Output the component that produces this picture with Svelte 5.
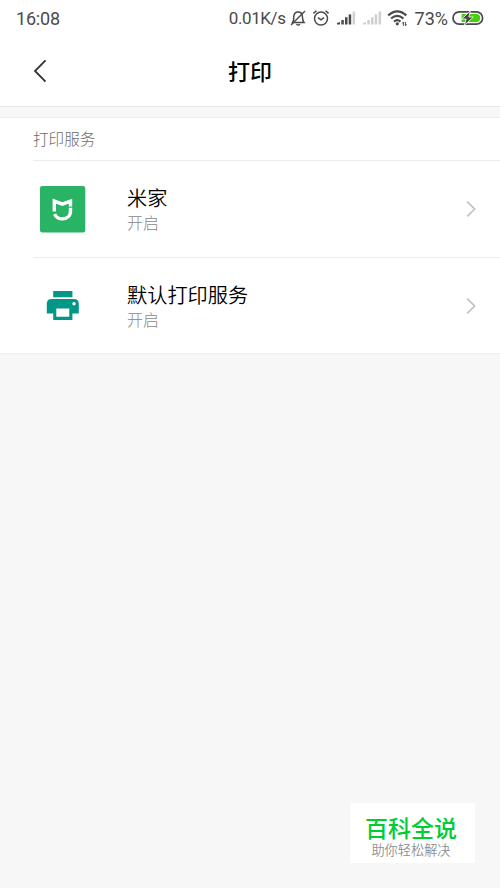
<script>
  const services = [
    { name: "米家", status: "开启", icon: "mijia" },
    { name: "默认打印服务", status: "开启", icon: "printer" },
  ];

  const signals = [
    { color: "#4a4a4a", last: "#d0d0d0" },
    { color: "#cfcfcf", last: "#cfcfcf" },
  ];
</script>

<div class="screen">
  <div class="status-bar">
    <span class="time">16:08</span>
    <div class="indicators">
      <span class="speed">0.01K/s</span>
      <svg class="bell" width="18" height="18" viewBox="0 0 18 18">
        <path d="M3.6 13.4 C5 11.5 4.6 9.5 4.8 7.4 C5.1 4.4 6.9 3 9.2 3 C11.3 3 13.2 4.5 13.4 7.4 C13.6 9.8 13.5 11.6 15 13.4 Z M7.4 15.2 Q9.2 17 11 15.2" />
        <path d="M2 16 L16 2" />
      </svg>
      <svg class="alarm" width="18" height="18" viewBox="0 0 18 18">
        <circle cx="9" cy="9.6" r="6.5" />
        <path d="M6 8.6 L9 10.9 L12 8.6" />
        <path d="M1.4 4.4 L4.5 1.7 M16.6 4.4 L13.5 1.7" />
      </svg>
      {#each signals as signal}
        <svg class="signal" width="19" height="14" viewBox="0 0 19 14">
          <g fill={signal.color}>
            <path d="M0 13.5 V12 L3 10.9 V13.5 Z" />
            <rect x="4.3" y="9" width="2.5" height="4.5" />
            <rect x="8" y="6.2" width="2.5" height="7.3" />
            <rect x="11.7" y="3.4" width="2.5" height="10.1" />
            <rect x="15.6" y="0.5" width="2.5" height="13" fill={signal.last} />
          </g>
        </svg>
      {/each}
      <svg class="wifi" width="22" height="18" viewBox="0 0 22 18">
        <path d="M1.2 6.4 Q10.2 -1.8 19.4 6.4 M4.1 9.6 Q10.2 4 16.4 9.6 M7 12.6 Q10.2 9.8 13.5 12.6" />
        <circle cx="10.3" cy="14.8" r="1.6" />
        <path class="traffic" d="M16.4 13 V16.8 M18.4 13 V16.8 M15.2 14.4 L16.4 13 M18.4 16.8 L19.6 15.4" />
      </svg>
      <span class="percent">73%</span>
      <svg class="battery" width="32" height="16" viewBox="0 0 32 16">
        <path class="charge" d="M9.6 4 H24.5 Q28.2 4 28.2 8 Q28.2 12 24.5 12 H9.6 Z" />
        <rect x="1" y="1.8" width="29.6" height="12.4" rx="6.2" />
        <path class="bolt" d="M18.4 0.8 L9.8 9 H14.2 L12.4 15.2 L21.4 7 H16.8 Z" />
      </svg>
    </div>
  </div>

  <header>
    <svg class="back" width="14" height="24" viewBox="0 0 14 24">
      <path d="M12.5 1.4 L2 12 L12.5 22.6" />
    </svg>
    <h1>打印</h1>
  </header>

  <section>
    <h2>打印服务</h2>
    {#each services as service}
      <div class="service">
        <div class="icon">
          {#if service.icon === "mijia"}
            <svg width="46" height="47" viewBox="0 0 46 47">
              <rect x="0" y="0" width="45.3" height="46.4" rx="2.2" fill="#28b365" />
              <path class="stroke" d="M14.3 25.4 V15.1 L22.3 18.2 L30.5 15.1 V20.4" />
              <path class="stroke" d="M30.5 21.8 V25 C30.5 30 26.8 32.9 22.3 32.9 C18.8 32.9 16 31.2 14.6 28.1" />
            </svg>
          {:else}
            <svg width="46" height="46" viewBox="0 0 46 46" fill="#009688">
              <path d="M13.2 8 H32.4 V14.3 H13.2 Z" />
              <path fill-rule="evenodd" d="M11.6 15.9 H34 Q38.8 15.9 38.8 20.7 V30.6 H32.4 V36.9 H13.2 V30.6 H6.8 V20.7 Q6.8 15.9 11.6 15.9 Z M16.3 25.6 V33.8 H29.3 V25.6 Z M34 19.1 A1.7 1.7 0 1 0 34 22.5 A1.7 1.7 0 1 0 34 19.1 Z" />
            </svg>
          {/if}
        </div>
        <div class="text">
          <div class="name">{service.name}</div>
          <div class="state">{service.status}</div>
        </div>
        <svg class="chevron" width="10" height="18" viewBox="0 0 10 18">
          <path d="M1.2 1.6 L8.6 9 L1.2 16.4" />
        </svg>
      </div>
    {/each}
  </section>

  <div class="badge">
    <strong>百科全说</strong>
    <span>助你轻松解决</span>
  </div>
</div>

<style>
  :global(body) {
    background: #f7f7f7;
  }

  .screen {
    position: relative;
    height: 888px;
    overflow: hidden;
    background: #f7f7f7;
    font-family: "Noto Sans CJK SC", sans-serif;
  }

  svg {
    display: block;
    flex: none;
  }

  .status-bar {
    display: flex;
    justify-content: space-between;
    height: 36px;
    padding: 0 16px;
    background: #fff;
    color: #4a4a4a;
    font: 18px/37px Roboto, sans-serif;
  }

  .time {
    letter-spacing: -0.2px;
  }

  .speed {
    font-size: 17px;
    letter-spacing: -0.4px;
  }

  .indicators {
    display: flex;
    align-items: center;
    height: 36px;
  }
  .indicators svg {
    fill: none;
    stroke: #4a4a4a;
    stroke-width: 1.5;
  }
  .indicators .bell {
    margin-left: 3px;
  }
  .indicators .alarm {
    margin-left: 5px;
  }
  .indicators .signal {
    margin-left: 7px;
    stroke: none;
  }
  .indicators .wifi {
    margin: 0 5.5px 0 5.5px;
    stroke-width: 2.1;
  }
  .wifi circle {
    fill: #4a4a4a;
    stroke: none;
  }
  .wifi .traffic {
    stroke-width: 1;
  }
  .indicators .battery {
    margin-left: 4px;
    stroke-width: 1.7;
  }
  .battery .charge {
    fill: #45cf0c;
    stroke: none;
  }
  .battery .bolt {
    fill: #444;
    stroke: #fff;
    stroke-width: 0.8;
  }

  header {
    display: grid;
    grid-template-columns: 1fr auto 1fr;
    align-items: center;
    height: 70px;
    background: #fff;
    border-bottom: 1px solid #e6e6e6;
  }

  .back {
    margin-left: 33px;
    fill: none;
    stroke: #333;
    stroke-width: 1.8;
  }

  h1 {
    margin: 0;
    padding-bottom: 2px;
    font-size: 22px;
    font-weight: 500;
    line-height: 32px;
    color: #000;
  }

  section {
    margin-top: 10px;
    background: #fff;
    border-top: 1px solid #efefef;
    border-bottom: 1px solid #efefef;
  }

  h2 {
    margin: 0;
    padding: 0 0 2px 33px;
    font-size: 15.6px;
    font-weight: 300;
    line-height: 40px;
    color: #6c6c6c;
  }

  .service {
    display: flex;
    align-items: center;
    box-sizing: border-box;
    height: 97px;
    margin-left: 33px;
    padding: 0 24px 0 7px;
    border-top: 1px solid #ebebeb;
  }
  .service:last-child {
    height: 96px;
  }

  .text {
    flex: 1;
    margin-left: 41px;
  }

  .name {
    font-size: 20.2px;
    font-weight: 350;
    line-height: 27px;
    color: #000;
  }

  .state {
    font-size: 16px;
    font-weight: 300;
    line-height: 23px;
    color: #888;
  }

  .icon .stroke {
    fill: none;
    stroke: #fff;
    stroke-width: 3.4;
  }

  .chevron {
    fill: none;
    stroke: #c2c2c2;
    stroke-width: 1.7;
  }

  .badge {
    position: absolute;
    right: 25px;
    bottom: 25px;
    display: flex;
    flex-direction: column;
    align-items: center;
    box-sizing: border-box;
    width: 125px;
    height: 60px;
    padding: 11px 3px 0 0;
    background: #fff;
  }
  .badge strong {
    font-size: 23px;
    font-weight: 500;
    line-height: 26px;
    color: #0c3;
  }
  .badge span {
    font-size: 13.2px;
    font-weight: 350;
    line-height: 19px;
    color: #8f8f8f;
  }
</style>
